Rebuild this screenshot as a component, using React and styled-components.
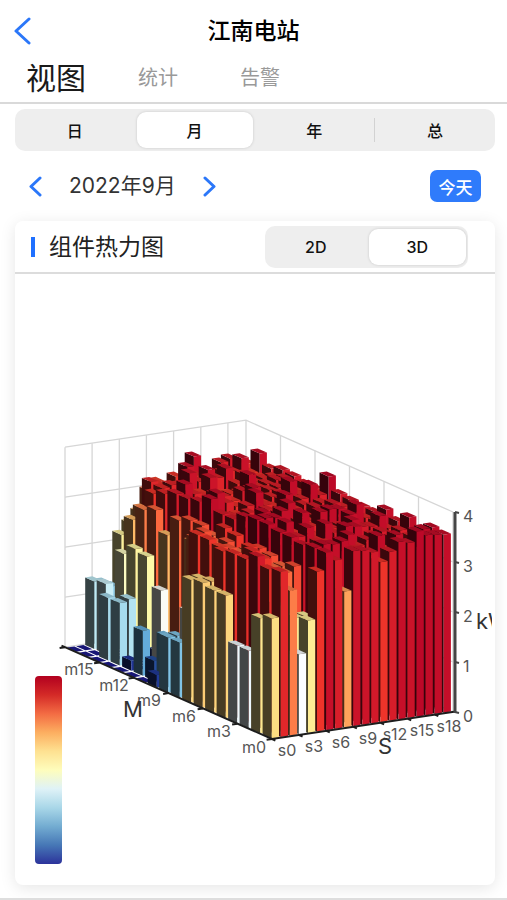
import React, {useState} from 'react';
import styled, {createGlobalStyle} from 'styled-components';

const GlobalStyle = createGlobalStyle`
    * {
        box-sizing: border-box;
    }

    body {
        margin: 0;
        background: #fff;
        font-family: Inter, "Noto Sans CJK SC", sans-serif;
        color: #1a1a1a;
    }

    button {
        font-family: inherit;
        border: none;
        padding: 0;
        cursor: pointer;
    }
`

const Page = styled.div`
    display: flex;
    flex-direction: column;
    min-height: 100vh;
    overflow: hidden;
    border-bottom: 2px solid #dedede;
`

const Header = styled.header`
    display: grid;
    grid-template-columns: 48px 1fr 48px;
    align-items: center;
    height: 62px;
`

const IconButton = styled.button`
    display: flex;
    align-items: center;
    justify-content: center;
    height: ${p => p.$large ? '60px' : '32px'};
    width: ${p => p.$large ? '44px' : '24px'};
    background: none;
    color: #2b77f9;
`

const Title = styled.h1`
    margin: 0;
    text-align: center;
    font-size: 23px;
    line-height: 32px;
    font-weight: 500;
    color: #000;
`

const Tabs = styled.nav`
    display: flex;
    align-items: center;
    height: 42px;
    padding: 0 26px 8px;
    border-bottom: 2px solid #d9d9d9;
`

const Tab = styled.button`
    background: none;
    line-height: 32px;
    font-size: ${p => p.$active ? '30px' : '20px'};
    color: ${p => p.$active ? '#1a1a1a' : '#999'};
    margin-right: ${p => p.$active ? '52px' : '62px'};
`

const Content = styled.main`
    display: flex;
    flex-direction: column;
    flex: 1;
    padding: 5px 12px 13px 15px;
`

const Segmented = styled.div`
    display: flex;
    height: 42px;
    padding: 3px 0;
    border-radius: 10px;
    background: #eee;
    width: ${p => p.$width || 'auto'};
`

const Segment = styled.button`
    flex: 1;
    margin: 0 2px;
    border-radius: 9px;
    font-size: 16px;
    font-weight: 500;
    color: #111;
    background: ${p => p.$active ? '#fff' : 'transparent'};
    box-shadow: ${p => p.$active ? '0 0 3px rgba(0, 0, 0, 0.16)' : 'none'};
`

const Separator = styled.span`
    width: 1px;
    margin: 6px 0;
    background: #d2d2d2;
`

const DateRow = styled.div`
    display: flex;
    align-items: center;
    height: 70px;
    padding: 0 14px 0 8px;
`

const DateText = styled.span`
    margin: 0 22px;
    font-size: 21px;
    line-height: 30px;
    color: #333;
`

const TodayButton = styled.button`
    margin-left: auto;
    width: 51px;
    height: 32px;
    border-radius: 7px;
    background: #2f7bfb;
    color: #fff;
    font-size: 17px;
    font-weight: 500;
`

const Card = styled.section`
    flex: 1;
    border-radius: 8px;
    background: #fff;
    box-shadow: 0 3px 16px rgba(0, 0, 0, 0.1);
`

const CardHeader = styled.div`
    display: flex;
    align-items: center;
    justify-content: space-between;
    height: 53px;
    padding: 0 27px 0 16px;
    border-bottom: 2px solid #dcdcdc;
`

const CardTitle = styled.h2`
    display: flex;
    align-items: center;
    gap: 14px;
    margin: 0;
    font-size: 23px;
    font-weight: 400;
    line-height: 32px;
    color: #222;

    &::before {
        content: '';
        width: 4px;
        height: 20px;
        background: #1f70ff;
    }
`

const ChartArea = styled.div`
    padding: 0 3px;
`

const Chart = styled.svg`
    display: block;
    width: 100%;
    font-family: Inter, sans-serif;
`

const AxisLabel = styled.text`
    font-size: 16px;
    fill: #555;
    text-anchor: ${p => p.$start ? 'start' : 'middle'};
`

const AxisName = styled.text`
    font-size: 22px;
    fill: #333;
`

// value (kW) -> colour of the lit side
const STOPS = [
    [0, [28, 26, 140]],
    [0.4, [36, 78, 160]],
    [0.9, [100, 172, 218]],
    [1.1, [128, 196, 230]],
    [1.35, [190, 234, 244]],
    [1.6, [250, 252, 255]],
    [2.1, [253, 250, 168]],
    [2.4, [252, 222, 130]],
    [2.65, [253, 178, 98]],
    [3, [252, 104, 62]],
    [3.2, [238, 52, 42]],
    [3.4, [212, 26, 42]],
    [3.65, [188, 8, 40]],
]

const LEGEND = ['#b2001f', '#d42a27', '#f36b43', '#fcae60', '#fee191', '#fefdbc', '#dff2f7', '#a9d7e8', '#73acd1', '#4677b6', '#2c339b']

const M_COUNT = 18
const S_COUNT = 20
const FRONT = [272, 740]
const S_STEP = [9.05, -1.35]
const M_STEP = [-11.5, -5.1]
const KW = 50

const ROWS = [
    [2.4, 2.3, 1.55, 1.55, 2.45, 2.45, 2.5, 2.45, 1.1, 1.1, 0.25, 0, 0, 0, 0, 0, 0, 0],
    [3.3, 3.25, 3.4, 3.25, 3.25, 3.2, 2.5, 2.45, 1.7, 1.1, 1, 0.4, 0.9, 0.2, 1.25, 1.25, 0, 0],
    [2.9, 2.5, 3.1, 3.2, 3.1, 3.1, 3.15, 3.2, 3.2, 0.4, 0.3, 0, 0, 0, 1.3, 0, 1.4, 1.35],
    [1.6, 1.5, 3, 3.2, 3.25, 3, 3.1, 3, 3.1, 3, 0.3, 0.2, 1.65, 0, 0, 0, 0, 1.3],
    [2.25, 2.2, 3, 3, 3.1, 3.2, 3, 3.1, 3, 3.1, 2.8, 0.5, 0.5, 0.3, 2.1, 2.15, 1.95, 1.2],
    [3.2, 2.2, 3.1, 3, 3.1, 3.15, 3, 3.2, 3.25, 3, 3.1, 3.1, 3, 2.6, 3, 2.9, 2.6, 2.2],
    [3.55, 3.55, 3.5, 3.55, 3.55, 3.6, 3.6, 3.55, 3.4, 3.4, 3.6, 3.45, 3.4, 3.4, 3.3, 3.2, 2.8, 2.4],
]
const M0 = [2.4, 3.3, 2.9, 1.6, 2.25, 3.2, 3.55, 3.37, 2.72, 3.5, 3.48, 3.42, 3.2, 3.38, 3.55, 3.5, 3.7, 3.6, 3.58, 3.56]
const S19 = [3.56, 3.6, 3.42, 3.6, 3.42, 3.55, 3.4, 3.4, 3.42, 3.45, 3.7, 3.35, 3.35, 3.4, 3.42, 3.35, 3.55, 3.25]
const M17 = [0, 0, 1.35, 1.3, 1.2, 2.2, 2.4, 2.6, 3, 3.15, 3, 3.2, 3.1, 3.55, 3.2, 3.1, 3.35, 3.4, 3.3, 3.25]

const noise = (s, m) => {
    const n = Math.sin(s * 127.1 + m * 311.7) * 43758.5453
    return n - Math.floor(n)
}

const getValue = (s, m) => {
    if (ROWS[s]) return ROWS[s][m]
    if (m === 0) return M0[s]
    if (s === 19) return S19[m]
    if (m === 17) return M17[s]
    const r = noise(s, m)
    const base = m > 13 ? 3.1 : 3.18
    return base + r * 0.3 + (r > 0.8 ? 0.13 : 0)
}

const getColor = (value, shade) => {
    let i = 1
    while (i < STOPS.length - 1 && STOPS[i][0] < value) i++
    const [v0, c0] = STOPS[i - 1]
    const [v1, c1] = STOPS[i]
    const t = Math.min(1, (value - v0) / (v1 - v0))
    const rgb = c0.map((c, k) => Math.round((c + (c1[k] - c) * t) * shade))
    return `rgb(${rgb.join(',')})`
}

const project = (s, m, v) => [
    FRONT[0] + s * S_STEP[0] + m * M_STEP[0],
    FRONT[1] + s * S_STEP[1] + m * M_STEP[1] - v * KW,
]

const toPoints = list => list.map(p => project(...p).map(n => n.toFixed(1)).join(',')).join(' ')

const Bar = ({s, m}) => {
    const v = getValue(s, m)
    const a = s + 0.1
    const b = s + 0.9
    const c = m + 0.1
    const d = m + 0.9
    return (
        <g>
            <polygon fill={getColor(v, 0.28)} points={toPoints([[a, c, 0], [a, d, 0], [a, d, v], [a, c, v]])}/>
            <polygon fill={getColor(v, 1)} points={toPoints([[a, c, 0], [b, c, 0], [b, c, v], [a, c, v]])}/>
            <polygon fill={getColor(v, 0.84)} points={toPoints([[a, c, v], [b, c, v], [b, d, v], [a, d, v]])}/>
        </g>
    )
}

// far bars first so the near ones cover them
const BARS = []
for (let s = S_COUNT - 1; s >= 0; s--) {
    for (let m = M_COUNT - 1; m >= 0; m--) {
        BARS.push({s, m})
    }
}

const every3 = count => Array.from({length: Math.ceil(count / 3)}, (_, i) => i * 3)

const HeatChart = () => (
    <Chart viewBox="18 275 474 607" role="img" aria-label="组件热力图">
        <defs>
            <linearGradient id="legend" x1="0" y1="0" x2="0" y2="1">
                {LEGEND.map((color, i) => <stop key={color} offset={i / 10} stopColor={color}/>)}
            </linearGradient>
        </defs>
        <g fill="none" stroke="#d6d6d6" strokeWidth="1.3">
            {[0, 1, 2, 3, 4].map(v => (
                <polyline key={v} points={toPoints([[0, 18, v], [20, 18, v], [20, 0, v]])}/>
            ))}
            {every3(20).concat(20).map(s => <polyline key={s} points={toPoints([[s, 18, 0], [s, 18, 4]])}/>)}
            {every3(18).map(m => <polyline key={m} points={toPoints([[20, m, 0], [20, m, 4]])}/>)}
        </g>
        {BARS.map(({s, m}) => <Bar key={`${s}-${m}`} s={s} m={m}/>)}
        <g fill="none" stroke="#1c1c1c" strokeWidth="2">
            <polyline points={toPoints([[0, 18.3, 0], [0, 0, 0], [20.3, 0, 0]])}/>
            {every3(18).concat(18).map(m => <polyline key={m} points={toPoints([[0, m, 0], [-0.6, m, 0]])}/>)}
            {every3(20).map(s => <polyline key={s} points={toPoints([[s, 0, 0], [s, -0.3, 0]])}/>)}
        </g>
        <g stroke="#454545" strokeWidth="2">
            <line x1="455" y1="513" x2="455" y2="714" strokeWidth="3"/>
            {[0, 1, 2, 3, 4].map(v => <line key={v} x1="455" x2="459" y1={713 - v * KW} y2={714 - v * KW}/>)}
        </g>
        {[0, 1, 2, 3, 4].map(v => <AxisLabel key={v} $start x="463" y={723 - v * KW}>{v}</AxisLabel>)}
        {every3(18).map((m, i) => <AxisLabel key={m} x={254 - i * 35} y={754 - i * 15.6}>m{m}</AxisLabel>)}
        {every3(20).map((s, i) => <AxisLabel key={s} x={287 + i * 27} y={757 - i * 4}>s{s}</AxisLabel>)}
        <AxisName x="123" y="718">M</AxisName>
        <AxisName x="378" y="755">S</AxisName>
        <AxisName x="476" y="630">kW</AxisName>
        <rect x="35" y="677" width="27" height="188" rx="4" fill="url(#legend)"/>
    </Chart>
)

const Chevron = ({width, height, right, stroke}) => (
    <svg width={width} height={height} viewBox={`0 0 ${width} ${height}`} fill="none" stroke="currentColor" strokeWidth={stroke} strokeLinecap="round" strokeLinejoin="round">
        <path d={right
            ? `M2 2L${width - 2} ${height / 2}L2 ${height - 2}`
            : `M${width - 2} 2L2 ${height / 2}L${width - 2} ${height - 2}`}/>
    </svg>
)

const TABS = ['视图', '统计', '告警']
const PERIODS = ['日', '月', '年', '总']

const App = () => {
    const [tab, setTab] = useState('视图')
    const [period, setPeriod] = useState('月')
    const [mode, setMode] = useState('3D')
    return (
        <>
        <GlobalStyle/>
        <Page>
            <Header>
                <IconButton $large aria-label="返回"><Chevron width={17} height={28} stroke={3}/></IconButton>
                <Title>江南电站</Title>
            </Header>
            <Tabs>
                {TABS.map(t => <Tab key={t} $active={t === tab} onClick={() => setTab(t)}>{t}</Tab>)}
            </Tabs>
            <Content>
                <Segmented>
                    {PERIODS.map(p => (
                        <React.Fragment key={p}>
                            {p === '总' && <Separator/>}
                            <Segment $active={p === period} onClick={() => setPeriod(p)}>{p}</Segment>
                        </React.Fragment>
                    ))}
                </Segmented>
                <DateRow>
                    <IconButton aria-label="上个月"><Chevron width={13} height={21} stroke={3}/></IconButton>
                    <DateText>2022年9月</DateText>
                    <IconButton aria-label="下个月"><Chevron right width={13} height={21} stroke={3}/></IconButton>
                    <TodayButton>今天</TodayButton>
                </DateRow>
                <Card>
                    <CardHeader>
                        <CardTitle>组件热力图</CardTitle>
                        <Segmented $width="203px">
                            {['2D', '3D'].map(k => <Segment key={k} $active={k === mode} onClick={() => setMode(k)}>{k}</Segment>)}
                        </Segmented>
                    </CardHeader>
                    <ChartArea>
                        <HeatChart/>
                    </ChartArea>
                </Card>
            </Content>
        </Page>
        </>
    )
}

export default App
